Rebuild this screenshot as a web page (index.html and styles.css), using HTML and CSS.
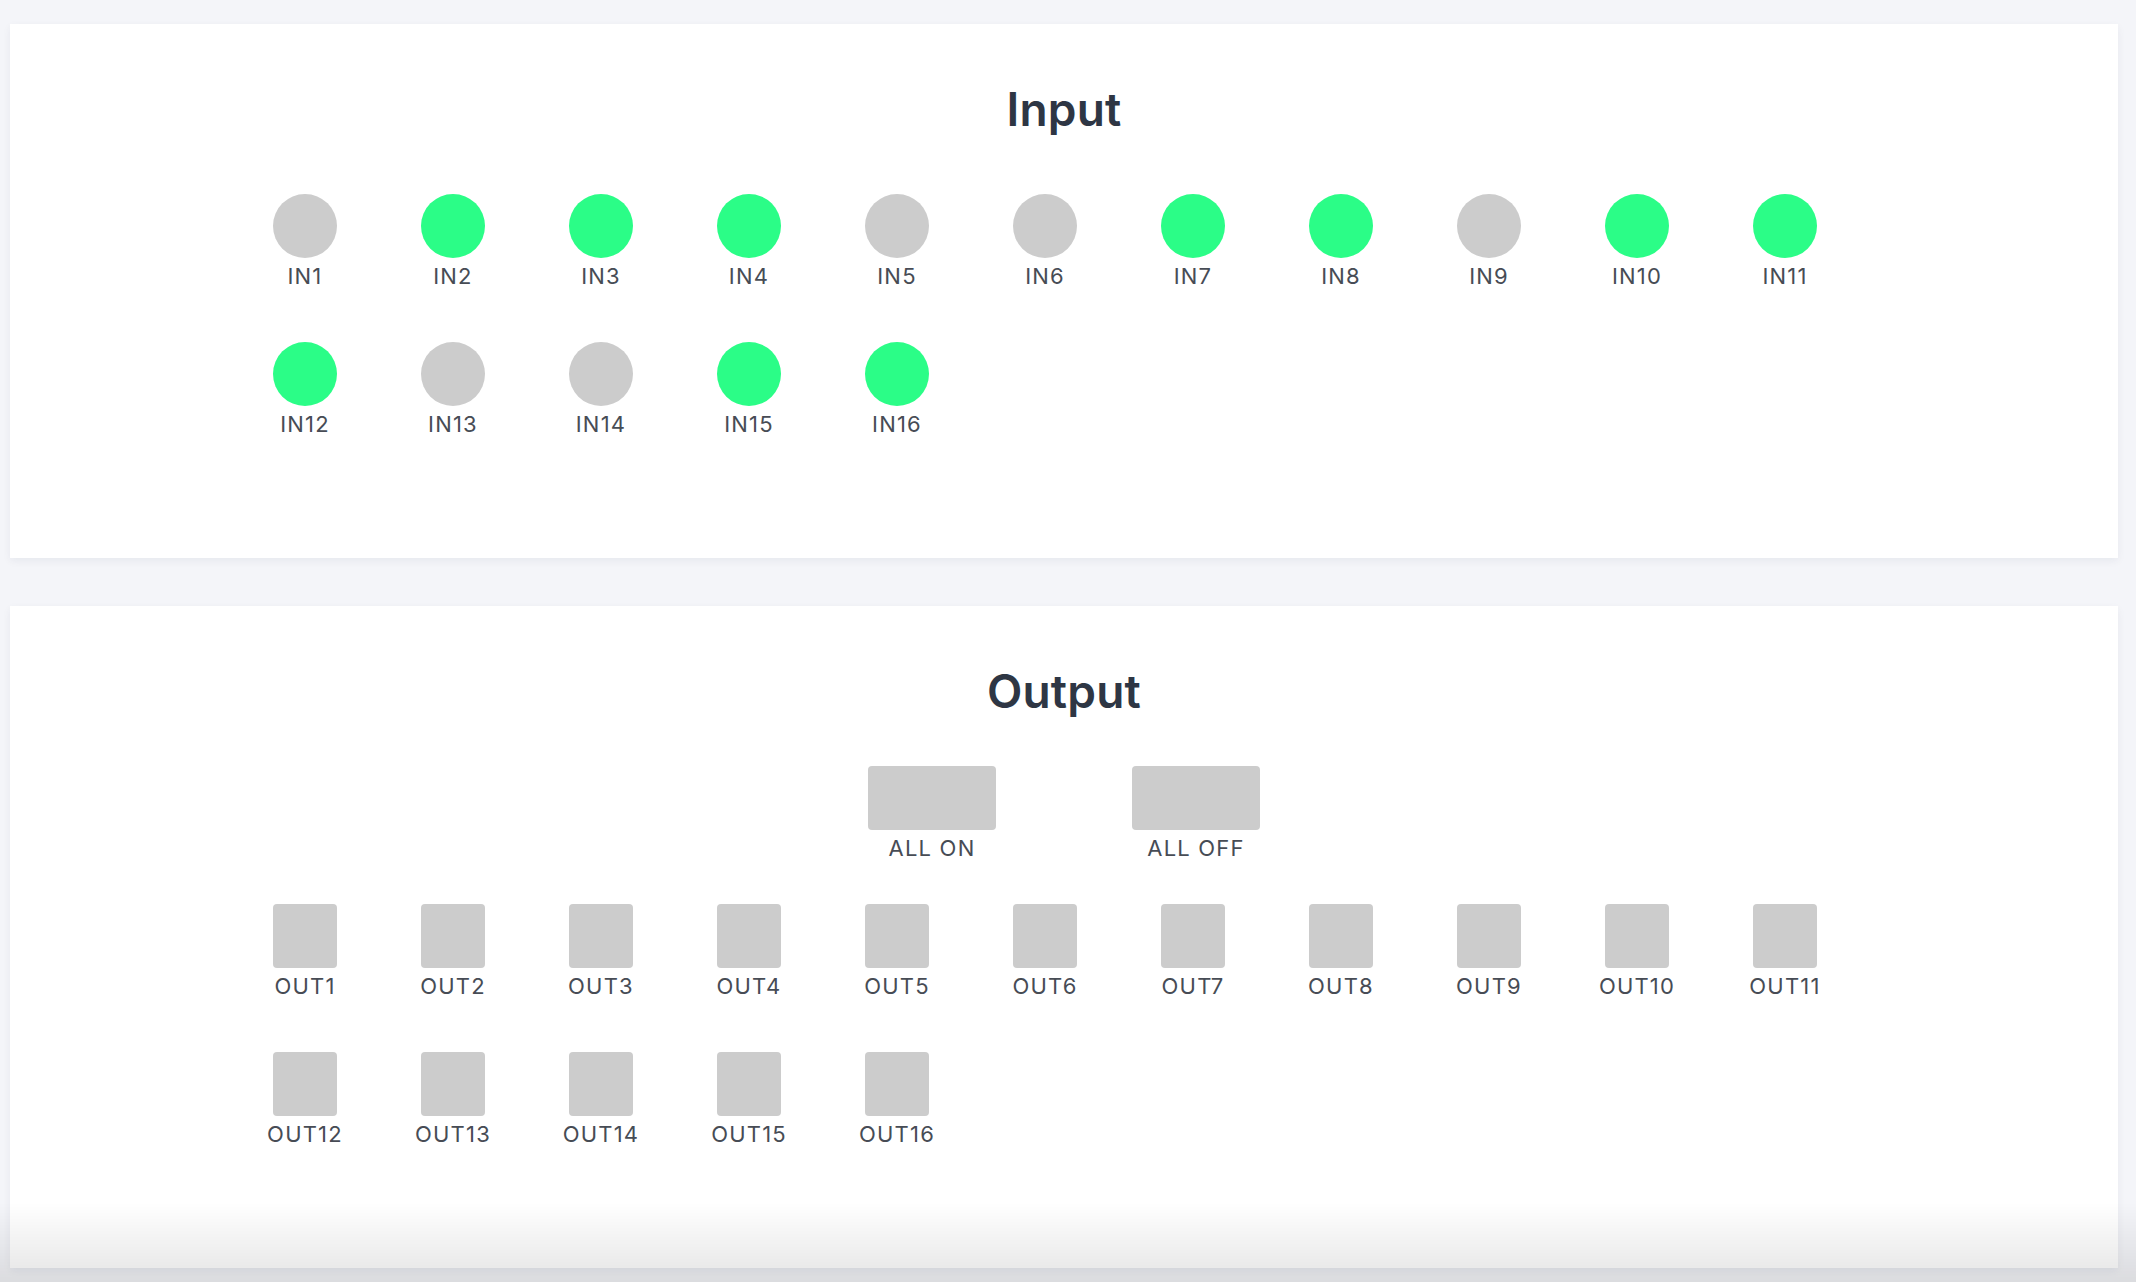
FILE: index.html
```html
<!DOCTYPE html>
<html lang="en">
<head>
<meta charset="utf-8">
<title>IO Panel</title>
<link rel="stylesheet" href="styles.css">
</head>
<body>
<div class="page">
  <section class="card card-input">
    <h2 class="card-title">Input</h2>
    <div class="io-grid">
      <div class="io-item"><div class="led"></div><span class="io-label">IN1</span></div>
      <div class="io-item"><div class="led on"></div><span class="io-label">IN2</span></div>
      <div class="io-item"><div class="led on"></div><span class="io-label">IN3</span></div>
      <div class="io-item"><div class="led on"></div><span class="io-label">IN4</span></div>
      <div class="io-item"><div class="led"></div><span class="io-label">IN5</span></div>
      <div class="io-item"><div class="led"></div><span class="io-label">IN6</span></div>
      <div class="io-item"><div class="led on"></div><span class="io-label">IN7</span></div>
      <div class="io-item"><div class="led on"></div><span class="io-label">IN8</span></div>
      <div class="io-item"><div class="led"></div><span class="io-label">IN9</span></div>
      <div class="io-item"><div class="led on"></div><span class="io-label">IN10</span></div>
      <div class="io-item"><div class="led on"></div><span class="io-label">IN11</span></div>
      <div class="io-item"><div class="led on"></div><span class="io-label">IN12</span></div>
      <div class="io-item"><div class="led"></div><span class="io-label">IN13</span></div>
      <div class="io-item"><div class="led"></div><span class="io-label">IN14</span></div>
      <div class="io-item"><div class="led on"></div><span class="io-label">IN15</span></div>
      <div class="io-item"><div class="led on"></div><span class="io-label">IN16</span></div>
    </div>
  </section>
  <section class="card card-output">
    <h2 class="card-title">Output</h2>
    <div class="all-row">
      <div class="all-item"><button class="all-btn" type="button"></button><span class="io-label all-label">ALL ON</span></div>
      <div class="all-item"><button class="all-btn" type="button"></button><span class="io-label all-label">ALL OFF</span></div>
    </div>
    <div class="io-grid">
      <div class="io-item"><button class="out-btn" type="button"></button><span class="io-label">OUT1</span></div>
      <div class="io-item"><button class="out-btn" type="button"></button><span class="io-label">OUT2</span></div>
      <div class="io-item"><button class="out-btn" type="button"></button><span class="io-label">OUT3</span></div>
      <div class="io-item"><button class="out-btn" type="button"></button><span class="io-label">OUT4</span></div>
      <div class="io-item"><button class="out-btn" type="button"></button><span class="io-label">OUT5</span></div>
      <div class="io-item"><button class="out-btn" type="button"></button><span class="io-label">OUT6</span></div>
      <div class="io-item"><button class="out-btn" type="button"></button><span class="io-label">OUT7</span></div>
      <div class="io-item"><button class="out-btn" type="button"></button><span class="io-label">OUT8</span></div>
      <div class="io-item"><button class="out-btn" type="button"></button><span class="io-label">OUT9</span></div>
      <div class="io-item"><button class="out-btn" type="button"></button><span class="io-label">OUT10</span></div>
      <div class="io-item"><button class="out-btn" type="button"></button><span class="io-label">OUT11</span></div>
      <div class="io-item"><button class="out-btn" type="button"></button><span class="io-label">OUT12</span></div>
      <div class="io-item"><button class="out-btn" type="button"></button><span class="io-label">OUT13</span></div>
      <div class="io-item"><button class="out-btn" type="button"></button><span class="io-label">OUT14</span></div>
      <div class="io-item"><button class="out-btn" type="button"></button><span class="io-label">OUT15</span></div>
      <div class="io-item"><button class="out-btn" type="button"></button><span class="io-label">OUT16</span></div>
    </div>
  </section>
</div>
<div class="bottom-fade"></div>
</body>
</html>
```
FILE: styles.css
```css
html, body {
  margin: 0;
  padding: 0;
}
body {
  background: #f4f5f9;
  font-family: Inter, "Noto Sans", "Liberation Sans", sans-serif;
  overflow: hidden;
}
.page {
  padding: 24px 18px 40px 10px;
  display: flex;
  flex-direction: column;
  gap: 48px;
}
.card {
  background: #ffffff;
  box-shadow: 0 3px 8px rgba(20, 30, 60, 0.06);
  padding: 57px 0 121px 221px;
}
.card-title {
  margin: 0 0 57px -221px;
  text-align: center;
  font-size: 46px;
  line-height: 56px;
  font-weight: 600;
  color: #2e3644;
  letter-spacing: 0.2px;
}
.card-output .card-title {
  margin-bottom: 47px;
}
.io-grid {
  display: grid;
  grid-template-columns: repeat(11, 148px);
  row-gap: 53px;
}
.io-item {
  display: flex;
  flex-direction: column;
  align-items: center;
}
.led {
  width: 64px;
  height: 64px;
  border-radius: 50%;
  background: #cccccc;
}
.led.on {
  background: #2bfd87;
}
.out-btn {
  display: block;
  width: 64px;
  height: 64px;
  border: 0;
  padding: 0;
  border-radius: 4px;
  background: #cccccc;
}
.io-label {
  margin-top: 5px;
  font-size: 22px;
  line-height: 26px;
  color: #474c55;
  letter-spacing: 1.2px;
}
.all-row {
  display: flex;
  justify-content: center;
  margin: 0 0 43px -221px;
}
.all-item {
  width: 264px;
  display: flex;
  flex-direction: column;
  align-items: center;
}
.all-btn {
  display: block;
  width: 128px;
  height: 64px;
  border: 0;
  padding: 0;
  border-radius: 4px;
  background: #cccccc;
}
.all-label {
  margin-top: 5px;
}
.bottom-fade {
  position: fixed;
  left: 0;
  right: 0;
  bottom: 0;
  height: 80px;
  background: linear-gradient(to bottom, rgba(0, 0, 0, 0), rgba(0, 0, 0, 0.1));
  pointer-events: none;
}
```
